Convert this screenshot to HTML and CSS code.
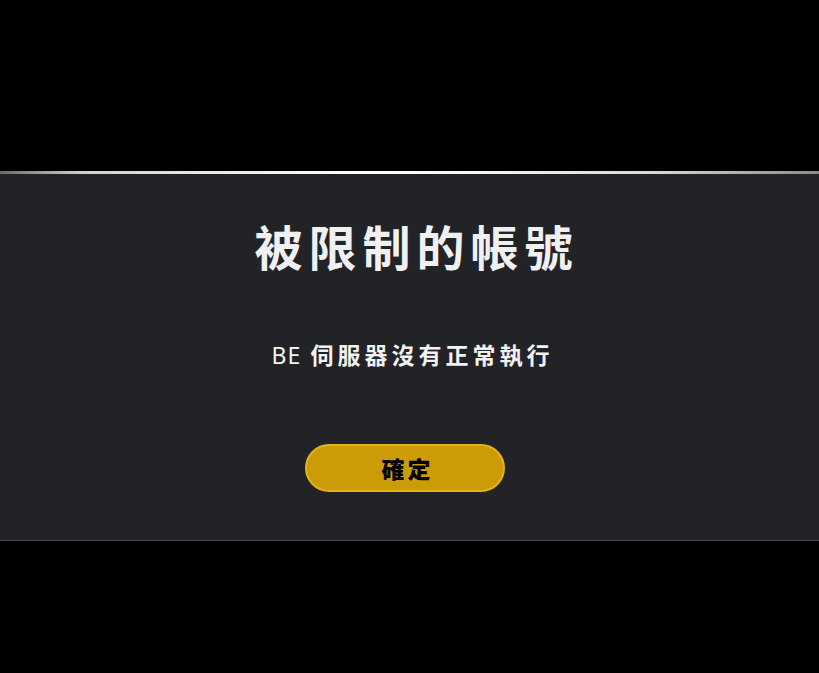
FILE: index.html
```html
<!DOCTYPE html>
<html lang="zh-Hant">
<head>
<meta charset="utf-8">
<link rel="stylesheet" href="styles.css">
</head>
<body>
<div class="top-space"></div>
<div class="strip"></div>
<div class="panel">
  <h1 class="title">被限制的帳號</h1>
  <p class="message"><span class="latin">BE</span> 伺服器沒有正常執行</p>
  <div class="actions">
    <button class="confirm">確定</button>
  </div>
</div>
</body>
</html>
```
FILE: styles.css
```css
html, body {
  margin: 0;
  padding: 0;
  background: #000;
  height: 100%;
  overflow: hidden;
}
body {
  font-family: "Noto Sans CJK TC", "Noto Sans", sans-serif;
}
.top-space {
  height: 171px;
}
.strip {
  height: 3px;
  background: linear-gradient(90deg, #6a6a6a 0%, #cfcfcf 10%, #e8e8e8 25%, #ffffff 45%, #f4f4f4 60%, #d8d8d8 80%, #8a8a8a 100%);
}
.panel {
  height: 367px;
  background: #222327;
  border-bottom: 1px solid #47484b;
  display: flex;
  flex-direction: column;
  align-items: center;
  box-sizing: border-box;
  padding-top: 38px;
}
.title {
  margin: 0;
  font-size: 48px;
  font-weight: 700;
  color: #f0f0f0;
  letter-spacing: 6px;
  line-height: 66px;
  padding-left: 14px;
}
.message {
  margin: 61px 0 0 0;
  font-size: 23px;
  font-weight: 700;
  color: #f2f2f2;
  letter-spacing: 4px;
  line-height: 30px;
  padding-left: 6px;
}
.latin {
  font-family: "Noto Sans", sans-serif;
  font-weight: 400;
  letter-spacing: 1px;
}
.actions {
  margin-top: 74px;
  padding-right: 10px;
}
.confirm {
  width: 200px;
  height: 48px;
  border-radius: 24px;
  background: #cb9c08;
  border: 2px solid #e2b418;
  color: #000;
  font-family: "Noto Sans CJK TC", sans-serif;
  font-size: 23px;
  font-weight: 900;
  letter-spacing: 3px;
  padding: 0 0 0 6px;
}
```
